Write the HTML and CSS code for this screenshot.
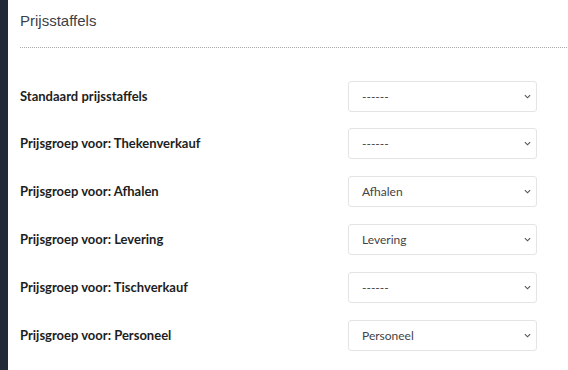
FILE: index.html
```html
<!DOCTYPE html>
<html lang="nl">
<head>
  <meta charset="UTF-8" />
  <title>Prijsstaffels</title>
  <link rel="stylesheet" href="styles.css">
</head>
<body>
  <div class="layout">
    <div class="sidebar"></div>

    <div class="content">
      <h2 class="panel-title">Prijsstaffels</h2>

      <div class="form">
        <div class="row">
          <label>Standaard prijsstaffels</label>
          <div class="select"><span>------</span><svg viewBox="0 0 8 5" class="chev"><path d="M1 1 L4 4 L7 1" /></svg></div>
        </div>
        <div class="row">
          <label>Prijsgroep voor: Thekenverkauf</label>
          <div class="select"><span>------</span><svg viewBox="0 0 8 5" class="chev"><path d="M1 1 L4 4 L7 1" /></svg></div>
        </div>
        <div class="row">
          <label>Prijsgroep voor: Afhalen</label>
          <div class="select"><span>Afhalen</span><svg viewBox="0 0 8 5" class="chev"><path d="M1 1 L4 4 L7 1" /></svg></div>
        </div>
        <div class="row">
          <label>Prijsgroep voor: Levering</label>
          <div class="select"><span>Levering</span><svg viewBox="0 0 8 5" class="chev"><path d="M1 1 L4 4 L7 1" /></svg></div>
        </div>
        <div class="row">
          <label>Prijsgroep voor: Tischverkauf</label>
          <div class="select"><span>------</span><svg viewBox="0 0 8 5" class="chev"><path d="M1 1 L4 4 L7 1" /></svg></div>
        </div>
        <div class="row">
          <label>Prijsgroep voor: Personeel</label>
          <div class="select"><span>Personeel</span><svg viewBox="0 0 8 5" class="chev"><path d="M1 1 L4 4 L7 1" /></svg></div>
        </div>
      </div>
    </div>
  </div>
</body>
</html>
```

FILE: styles.css
```css
body {
  margin: 0;
  background: #fff;
  font-family: Lato, "Liberation Sans", sans-serif;
}

.layout {
  display: flex;
  min-height: 370px;
}

.sidebar {
  width: 8px;
  flex-shrink: 0;
  background: #222a38;
}

.content {
  flex: 1;
  padding: 0 1px 0 12px;
}

.panel-title {
  margin: 0;
  padding: 12px 0 0;
  height: 35px;
  font-family: "Liberation Sans", Arial, sans-serif;
  font-weight: normal;
  font-size: 15px;
  color: #3b3f47;
  border-bottom: 1px dotted #a9a9a9;
}

.form {
  padding-top: 25px;
}

.row {
  display: flex;
  align-items: center;
  height: 48px;
}

.row:first-child {
  height: 46px;
}

.row label {
  width: 328px;
  font-size: 13px;
  font-weight: bold;
  color: #1d1e22;
}

.select {
  box-sizing: border-box;
  width: 189px;
  height: 31px;
  display: flex;
  align-items: center;
  justify-content: space-between;
  padding: 0 5px 0 13px;
  border: 1px solid #e4e4e4;
  border-radius: 3px;
  font-size: 12px;
  color: #444;
}

.chev {
  width: 7px;
  height: 5px;
}

.chev path {
  fill: none;
  stroke: #555;
  stroke-width: 1.3;
}
```
